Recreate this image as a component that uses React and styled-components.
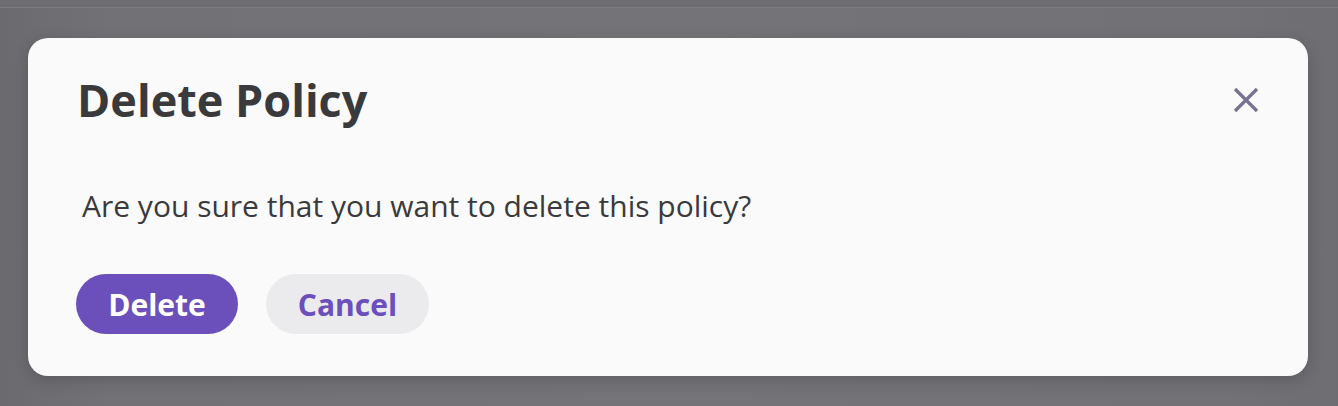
import React from "react";
import styled, { createGlobalStyle } from "styled-components";

const GlobalStyle = createGlobalStyle`
  html, body {
    margin: 0;
    padding: 0;
    background: #727175;
    font-family: "Open Sans", "Liberation Sans", sans-serif;
  }
`;

const Page = styled.div`
  min-height: 406px;
  background: linear-gradient(90deg, #6b6a6e 0%, #727175 8%, #747377 50%, #727175 92%, #6e6d71 100%);
`;

const TopBar = styled.div`
  height: 7px;
  background: #6d6c70;
  border-bottom: 1px solid #7d7c81;
`;

const Overlay = styled.div`
  padding: 30px 30px 30px 28px;
`;

const Dialog = styled.div`
  background: #fafafa;
  border-radius: 20px;
  box-shadow: 0 4px 16px rgba(0, 0, 0, 0.18);
  padding: 34px 48px 0 48px;
  height: 338px;
  box-sizing: border-box;
  display: flex;
  flex-direction: column;
`;

const Header = styled.div`
  display: flex;
  align-items: center;
  justify-content: space-between;
`;

const Title = styled.h2`
  margin: 0 0 0 1px;
  font-size: 45px;
  line-height: 56px;
  font-weight: 700;
  color: #3a3a3c;
`;

const CloseButton = styled.button`
  border: none;
  background: none;
  padding: 0;
  width: 28px;
  height: 28px;
  display: flex;
  align-items: center;
  justify-content: center;
  color: #787291;
  cursor: pointer;
`;

const Message = styled.p`
  margin: 58px 0 0 6px;
  font-size: 30px;
  line-height: 40px;
  color: #3a3a3c;
`;

const Actions = styled.div`
  display: flex;
  gap: 28px;
  margin-top: 48px;
`;

const Button = styled.button`
  height: 60px;
  min-width: ${p => p.$width}px;
  border: none;
  border-radius: 30px;
  padding: 0 30px;
  font-family: "Open Sans", "Liberation Sans", sans-serif;
  font-size: 30px;
  font-weight: 700;
  background: ${p => (p.$primary ? "#6b4fbb" : "#ebebee")};
  color: ${p => (p.$primary ? "#ffffff" : "#6b4fbb")};
  cursor: pointer;
`;

const CloseIcon = () => (
  <svg width="26" height="26" viewBox="0 0 26 26" fill="none">
    <path d="M2 2 L24 24 M24 2 L2 24" stroke="currentColor" strokeWidth="3.2" />
  </svg>
);

export default function App() {
  return (
    <>
      <GlobalStyle />
      <Page>
        <TopBar />
        <Overlay>
          <Dialog role="dialog">
            <Header>
              <Title>Delete Policy</Title>
              <CloseButton aria-label="Close">
                <CloseIcon />
              </CloseButton>
            </Header>
            <Message>Are you sure that you want to delete this policy?</Message>
            <Actions>
              <Button $primary $width={162}>Delete</Button>
              <Button $width={163}>Cancel</Button>
            </Actions>
          </Dialog>
        </Overlay>
      </Page>
    </>
  );
}
